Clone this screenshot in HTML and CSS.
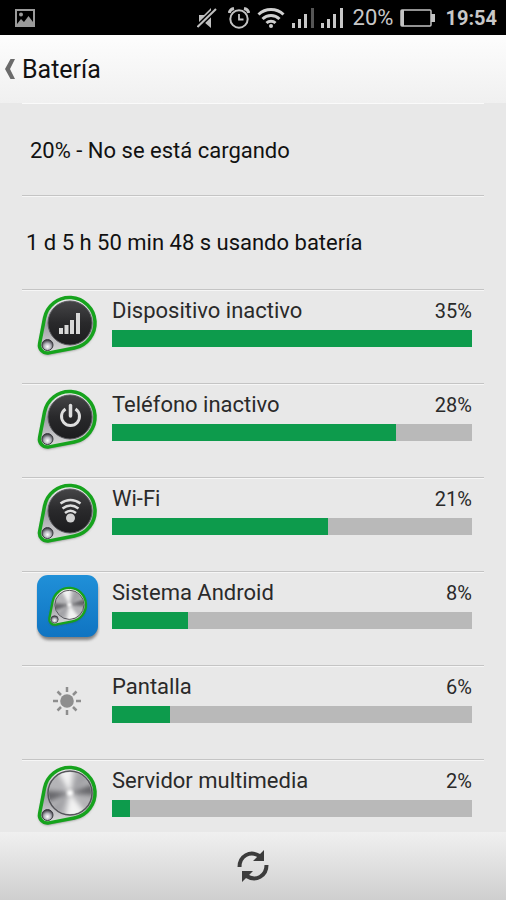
FILE: index.html
```html
<!DOCTYPE html>
<html lang="es">
<head>
  <meta charset="UTF-8" />
  <meta name="viewport" content="width=device-width, initial-scale=1.0"/>
  <title>Batería</title>
  <link rel="stylesheet" href="styles.css">
</head>
<body>

  <!-- Iconos compartidos -->
  <svg class="defs" width="0" height="0" aria-hidden="true">
    <defs>
      <linearGradient id="plate" x1="0" y1="0" x2="0" y2="1">
        <stop offset="0" stop-color="#f4f4f4"/><stop offset="0.5" stop-color="#a0a0a6"/><stop offset="1" stop-color="#dcdcdc"/>
      </linearGradient>
      <linearGradient id="dark" x1="0" y1="0" x2="0" y2="1">
        <stop offset="0" stop-color="#454547"/><stop offset="0.5" stop-color="#29292b"/><stop offset="1" stop-color="#1c1c1e"/>
      </linearGradient>
      <linearGradient id="blue" x1="0" y1="0" x2="0" y2="1">
        <stop offset="0" stop-color="#2090d8"/><stop offset="1" stop-color="#0f74c2"/>
      </linearGradient>
      <radialGradient id="screw" cx="0.5" cy="0.65" r="0.6">
        <stop offset="0" stop-color="#fff"/><stop offset="0.5" stop-color="#b5b5bd"/><stop offset="1" stop-color="#3a3a40"/>
      </radialGradient>
      <filter id="soft" x="-30%" y="-30%" width="160%" height="160%"><feGaussianBlur stdDeviation="1.6"/></filter>
      <filter id="brushed" x="-30%" y="-30%" width="160%" height="160%"><feGaussianBlur stdDeviation="2.6"/></filter>
      <clipPath id="disc"><circle cx="34" cy="30" r="21"/></clipPath>
      <g id="case">
        <path d="M8.5 26.7A25.5 25.5 0 1 1 38.3 56.5L13 61.4A8 8 0 0 1 3.6 52Z" fill="#444" opacity="0.8" filter="url(#soft)"/>
        <path d="M8.5 25.2A25.5 25.5 0 1 1 38.3 55L13 59.9A8 8 0 0 1 3.6 50.5Z" fill="url(#plate)" stroke="#16a31d" stroke-width="3.5"/>
        <circle cx="11.5" cy="52" r="5.5" fill="url(#screw)" stroke="#3b3b40" stroke-width="1"/>
      </g>
      <g id="knob-dark">
        <use href="#case"/>
        <circle cx="34" cy="30" r="22" fill="url(#dark)" stroke="#58585c" stroke-width="1"/>
      </g>
      <g id="knob-metal">
        <use href="#case"/>
        <circle cx="34" cy="30" r="22" fill="#b4b4b7" stroke="#55555a" stroke-width="1.5"/>
        <g clip-path="url(#disc)">
          <g filter="url(#brushed)">
            <path d="M34 30L18 2L38 2Z M34 30L28 60L54 56Z" fill="#f2f2f2"/>
            <path d="M34 30L64 18L64 33Z M34 30L4 27L4 42Z" fill="#66666a"/>
            <path d="M34 30L46 2L60 12Z M34 30L8 50L18 60Z" fill="#a2a2a6"/>
          </g>
          <circle cx="34" cy="30" r="3" fill="#fff" filter="url(#soft)"/>
        </g>
      </g>
    </defs>
  </svg>

  <div class="status-bar">
    <svg class="photo" width="20" height="18" viewBox="0 0 20 18">
      <rect x="1" y="1" width="18" height="16" fill="none" stroke="#9b9b9b" stroke-width="2"/>
      <circle cx="6" cy="5.5" r="2" fill="#9b9b9b"/>
      <path d="M2 15L6 10L9 13L13.5 7L18 13V16H2Z" fill="#9b9b9b"/>
    </svg>
    <div class="status-icons">
      <svg class="mute" width="20" height="20" viewBox="0 0 20 20">
        <path d="M2 7H7L14 0V20L7 14H2Z" fill="#c0c0c0"/>
        <path d="M0.5 19L19 1" stroke="#000" stroke-width="5"/>
        <path d="M0.5 19L19 1" stroke="#c0c0c0" stroke-width="2"/>
      </svg>
      <svg class="alarm" width="22" height="22" viewBox="0 0 22 22" fill="none" stroke="#c4c4c4">
        <circle cx="11" cy="12" r="8.7" stroke-width="2"/>
        <path d="M11 7V12.5H15.5" stroke-width="1.8"/>
        <path d="M1.2 6A6 6 0 0 1 6 1.5M20.8 6A6 6 0 0 0 16 1.5" stroke-width="3"/>
      </svg>
      <svg class="wifi" width="28" height="22" viewBox="0 0 28 22" fill="none" stroke="#d0d0d0" stroke-width="3">
        <path d="M1.5 7.5A18 18 0 0 1 26.5 7.5"/>
        <path d="M5.5 12A12 12 0 0 1 22.5 12"/>
        <path d="M9.5 16A6.5 6.5 0 0 1 18.5 16"/>
        <circle cx="14" cy="19" r="2" fill="#d0d0d0" stroke="none"/>
      </svg>
      <svg class="signal" width="22" height="20" viewBox="0 0 22 20" fill="#c8c8c8">
        <path d="M0 15h3v5h-3zM6 11h3v9h-3zM12 6h3v14h-3z"/><path d="M19 0h3v20h-3z" fill="#555"/>
      </svg>
      <svg class="signal" width="22" height="20" viewBox="0 0 22 20" fill="#c8c8c8">
        <path d="M0 15h3v5h-3zM6 11h3v9h-3zM12 6h3v14h-3zM19 0h3v20h-3z"/>
      </svg>
      <span class="charge">20%</span>
      <svg class="cell" width="36" height="18" viewBox="0 0 36 18">
        <rect x="1" y="1" width="30" height="16" rx="1" fill="none" stroke="#c4c4c4" stroke-width="1.5"/>
        <path d="M1 1h3v16h-3zM31 5h4v8h-4z" fill="#c4c4c4"/>
      </svg>
      <span class="clock">19:54</span>
    </div>
  </div>

  <header>
    <button class="back" type="button" aria-label="Atrás">
      <svg width="10" height="20" viewBox="0 0 10 20"><path d="M5.5 0H10L5 10L10 20H5.500L0 10Z" fill="#6b6b6b"/></svg>
    </button>
    <h1>Batería</h1>
  </header>

  <main>
    <p class="summary level">20% - No se está cargando</p>
    <p class="summary">1 d 5 h 50 min 48 s usando batería</p>

    <ul class="usage">
      <li>
        <svg class="icon" width="64" height="68" viewBox="0 0 64 68">
          <use href="#knob-dark"/>
          <path d="M23 35h4v6h-4zM28.5 32h4v9h-4zM34 27h4v14h-4zM40 20h4v21h-4z" fill="#d8d8d8"/>
        </svg>
        <div class="detail">
          <div class="label"><span>Dispositivo inactivo</span><span class="percent">35%</span></div>
          <div class="bar"><div class="fill" style="width: 100%"></div></div>
        </div>
      </li>
      <li>
        <svg class="icon" width="64" height="68" viewBox="0 0 64 68">
          <use href="#knob-dark"/>
          <path d="M29.5 22A9 9 0 1 0 39.5 22" fill="none" stroke="#dedede" stroke-width="3"/>
          <path d="M34.5 18.5V29" stroke="#dedede" stroke-width="3.5" stroke-linecap="round"/>
        </svg>
        <div class="detail">
          <div class="label"><span>Teléfono inactivo</span><span class="percent">28%</span></div>
          <div class="bar"><div class="fill" style="width: 79%"></div></div>
        </div>
      </li>
      <li>
        <svg class="icon" width="64" height="68" viewBox="0 0 64 68">
          <use href="#knob-dark"/>
          <path d="M24.5 22.5Q34.500 15.500 44.5 22.5M26.5 27.5Q34.500 21.500 42.5 27.5M29 32Q34.500 27.500 40 32" fill="none" stroke="#dedede" stroke-width="2.5"/>
          <circle cx="34.5" cy="37" r="4.5" fill="#d0d0d0"/>
        </svg>
        <div class="detail">
          <div class="label"><span>Wi-Fi</span><span class="percent">21%</span></div>
          <div class="bar"><div class="fill" style="width: 60%"></div></div>
        </div>
      </li>
      <li>
        <svg class="icon" width="64" height="68" viewBox="0 0 64 68">
          <rect x="2" y="4" width="60" height="61" rx="11" fill="#555" opacity="0.7" filter="url(#soft)"/>
          <rect x="1" y="0" width="61" height="62" rx="11" fill="url(#blue)"/>
          <use href="#knob-metal" transform="translate(11 10) scale(0.66)"/>
        </svg>
        <div class="detail">
          <div class="label"><span>Sistema Android</span><span class="percent">8%</span></div>
          <div class="bar"><div class="fill" style="width: 21%"></div></div>
        </div>
      </li>
      <li>
        <svg class="icon" width="64" height="68" viewBox="0 0 64 68">
          <circle cx="31" cy="32" r="6.8" fill="#8e8e8e"/>
          <path d="M31 18v5M31 41v5M17 32h5M40 32h5M21.5 22.5l3.5 3.5M37 38l3.5 3.5M40.5 22.5l-3.5 3.5M25 38l-3.5 3.5" stroke="#8e8e8e" stroke-width="2.5"/>
        </svg>
        <div class="detail">
          <div class="label"><span>Pantalla</span><span class="percent">6%</span></div>
          <div class="bar"><div class="fill" style="width: 16%"></div></div>
        </div>
      </li>
      <li>
        <svg class="icon" width="64" height="68" viewBox="0 0 64 68"><use href="#knob-metal"/></svg>
        <div class="detail">
          <div class="label"><span>Servidor multimedia</span><span class="percent">2%</span></div>
          <div class="bar"><div class="fill" style="width: 5%"></div></div>
        </div>
      </li>
    </ul>
  </main>

  <footer>
    <button class="refresh" type="button" aria-label="Actualizar">
      <svg width="32" height="34" viewBox="0 0 32 34">
        <path d="M2.5 18C2.5 7 13 1 22.5 7M29.5 16C29.5 27 19 33 9.5 27" fill="none" stroke="#3c3c3c" stroke-width="4"/>
        <path d="M27 1V12H16ZM5 33V22H16Z" fill="#3c3c3c"/>
      </svg>
    </button>
  </footer>

</body>
</html>
```
FILE: styles.css
```css
* { box-sizing: border-box; margin: 0; padding: 0; }

body {
  display: flex;
  flex-direction: column;
  height: 100vh;
  overflow: hidden;
  background: #e8e8e8;
  color: #111;
  font-family: Roboto, sans-serif;
  font-size: 22px;
  line-height: 26px;
}

svg {
  display: block;
  flex: none;
}

.defs {
  position: absolute;
}

button {
  border: none;
  background: none;
  cursor: pointer;
}

.status-bar {
  display: flex;
  flex: none;
  align-items: center;
  justify-content: space-between;
  height: 35px;
  padding: 0 9px 0 15px;
  background: #000;
  color: #c8c8c8;
}

.status-icons {
  display: flex;
  align-items: center;
  gap: 7px;
}

.alarm {
  margin-left: 4px;
}

.charge {
  margin-left: 3px;
}

.clock {
  margin-left: 2px;
  font-size: 20px;
  font-weight: bold;
}

header {
  display: flex;
  flex: none;
  align-items: center;
  gap: 7px;
  height: 68px;
  padding-left: 5px;
  background: linear-gradient(#fdfdfd, #f0f0f0);
}

h1 {
  padding-top: 2px;
  font-size: 25px;
  font-weight: normal;
  line-height: 30px;
}

main {
  flex: 1;
  min-height: 0;
  overflow: hidden;
  padding: 0 22px;
}

.summary {
  height: 94px;
  padding: 34px 4px;
  border-bottom: 1px solid #c4c4c4;
  box-shadow: 0 1px #f6f6f6;
}

.level {
  height: 93px;
  padding-left: 8px;
  border-top: 1px solid #fafafa;
}

.usage {
  list-style: none;
}

.usage li {
  display: flex;
  gap: 12px;
  height: 94px;
  padding: 3px 12px 0 14px;
  border-bottom: 1px solid #c4c4c4;
  box-shadow: 0 1px #f6f6f6;
}

.detail {
  flex: 1;
  padding-top: 5px;
}

.label {
  display: flex;
  justify-content: space-between;
  margin-bottom: 6px;
  color: #2a2a2a;
}

.percent {
  font-size: 20px;
}

.bar {
  height: 17px;
  background: #b9b9b9;
}

.fill {
  height: 100%;
  background: #0d9b4c;
}

footer {
  display: flex;
  flex: none;
  align-items: center;
  justify-content: center;
  height: 68px;
  background: linear-gradient(#f0f0f0, #cfcfcf);
}
```
